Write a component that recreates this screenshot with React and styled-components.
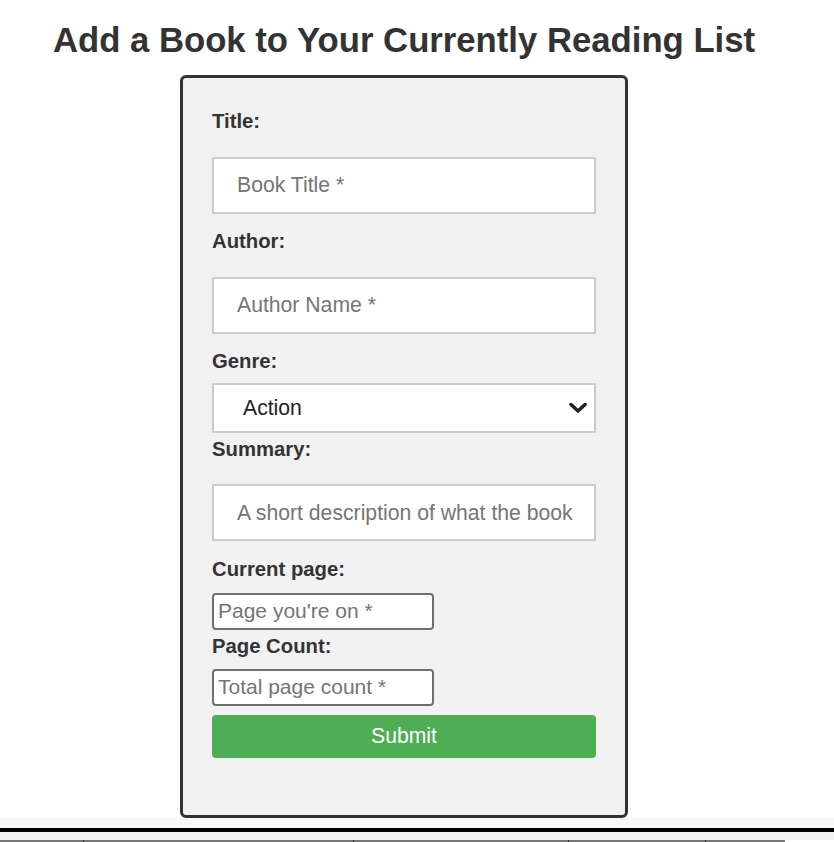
import React from 'react'
import styled, { createGlobalStyle } from 'styled-components'

const GlobalStyle = createGlobalStyle`
    body {
        margin: 0;
        background: #fff;
        color: #333;
        font-family: "Liberation Sans", Arial, Helvetica, sans-serif;
    }
`

const Page = styled.div`
    width: 808px;
`

const Heading = styled.h1`
    margin: 20px 0 14px;
    font-size: 34.7px;
    line-height: 41px;
    font-weight: 700;
    text-align: center;
    color: #333;
`

const FormCard = styled.form`
    box-sizing: border-box;
    width: 448px;
    margin: 0 auto;
    padding: 31px 29px 57px;
    display: flex;
    flex-direction: column;
    background: #f1f1f1;
    border: 3px solid #333;
    border-radius: 6px;
`

const Label = styled.label`
    font-size: 20.3px;
    line-height: 24px;
    font-weight: 700;
    color: #333;
`

const TextInput = styled.input`
    box-sizing: border-box;
    width: 100%;
    height: 57px;
    margin: 23.5px 0 15.5px;
    padding: 0 20px 0 23px;
    font: 21.2px "Liberation Sans", Arial, sans-serif;
    color: #222;
    background: #fff;
    border: 2px solid #ccc;
    border-radius: 0;
    outline: none;
    &::placeholder { color: #757575; }
`

const SelectWrap = styled.div`
    position: relative;
    margin: 9.5px 0 4px;
`

const Select = styled.select`
    box-sizing: border-box;
    width: 100%;
    height: 50px;
    padding: 0 40px 0 29px;
    appearance: none;
    font: 21.2px "Liberation Sans", Arial, sans-serif;
    color: #222;
    background: #fff;
    border: 2px solid #ccc;
    border-radius: 0;
    outline: none;
`

const Chevron = styled.svg`
    position: absolute;
    right: 9px;
    top: 50%;
    transform: translateY(-50%);
    pointer-events: none;
`

const SmallInput = styled.input`
    box-sizing: border-box;
    width: 222px;
    height: 37.5px;
    margin: ${p => p.$top}px 0 ${p => p.$bottom}px;
    padding: 0 4px;
    font: 21px "Liberation Sans", Arial, sans-serif;
    color: #222;
    background: #fff;
    border: 2px solid #6f6f6f;
    border-radius: 4px;
    outline: none;
    &::placeholder { color: #757575; }
`

const SubmitButton = styled.button`
    height: 43.5px;
    margin-top: 8.5px;
    font: 21.2px "Liberation Sans", Arial, sans-serif;
    color: #fff;
    background: #4fae55;
    border: none;
    border-radius: 4px;
    cursor: pointer;
`

const Strip = styled.div`
    width: 834px;
    height: ${p => p.$h}px;
    background: ${p => p.$bg};
`

const TableHead = styled.div`
    display: flex;
    width: 785px;
    height: 20px;
`

const HeadCell = styled.div`
    position: relative;
    width: ${p => p.$w}px;
    border-top: 3px solid #767676;
    &::before {
        content: '';
        display: ${p => (p.$first ? 'none' : 'block')};
        position: absolute;
        left: 0;
        top: -3px;
        width: 1px;
        height: 23px;
        background: #333;
    }
`

const genres = ['Action', 'Adventure', 'Fantasy', 'Mystery', 'Romance', 'Science Fiction', 'Non-fiction']

const App = () => {
    return (
        <Page>
            <GlobalStyle />
            <Heading>Add a Book to Your Currently Reading List</Heading>
            <FormCard onSubmit={e => e.preventDefault()}>
                <Label htmlFor="title">Title:</Label>
                <TextInput id="title" placeholder="Book Title *" />
                <Label htmlFor="author">Author:</Label>
                <TextInput id="author" placeholder="Author Name *" />
                <Label htmlFor="genre">Genre:</Label>
                <SelectWrap>
                    <Select id="genre" defaultValue="Action">
                        {genres.map(g => <option key={g}>{g}</option>)}
                    </Select>
                    <Chevron width="18" height="11" viewBox="0 0 18 11">
                        <polyline points="2,2 9,8.5 16,2" fill="none" stroke="#222" strokeWidth="3.5" strokeLinecap="round" strokeLinejoin="round" />
                    </Chevron>
                </SelectWrap>
                <Label htmlFor="summary">Summary:</Label>
                <TextInput id="summary" placeholder="A short description of what the book is about *" />
                <Label htmlFor="current">Current page:</Label>
                <SmallInput id="current" $top={12} $bottom={3.5} placeholder="Page you're on *" />
                <Label htmlFor="count">Page Count:</Label>
                <SmallInput id="count" $top={11} $bottom={0} placeholder="Total page count *" />
                <SubmitButton type="submit">Submit</SubmitButton>
            </FormCard>
            <Strip $h={10} $bg="#f6f8fa" />
            <Strip $h={4} $bg="#000" />
            <Strip $h={8} $bg="#f1f1f1" />
            <TableHead>
                <HeadCell $w={83} $first />
                <HeadCell $w={270} />
                <HeadCell $w={215} />
                <HeadCell $w={137} />
                <HeadCell $w={80} />
            </TableHead>
        </Page>
    )
}

export default App
